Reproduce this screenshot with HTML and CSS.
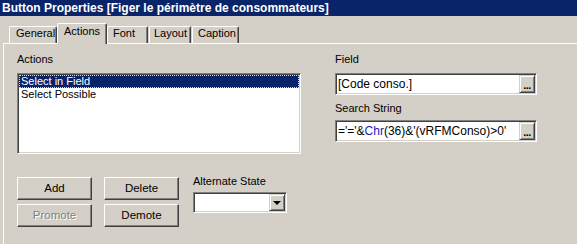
FILE: index.html
```html
<!DOCTYPE html>
<html>
<head>
<meta charset="utf-8">
<link rel="stylesheet" href="styles.css">
</head>
<body>
<div class="titlebar">Button Properties [Figer le périmètre de consommateurs]</div>
<div class="tabs">
  <div class="tab t-general">General</div>
  <div class="tab active t-actions">Actions</div>
  <div class="tab t-font">Font</div>
  <div class="tab t-layout">Layout</div>
  <div class="tab t-caption">Caption</div>
</div>
<div class="panel">
  <div class="top">
    <div class="col-left">
      <div class="label">Actions</div>
      <div class="listbox">
        <div class="item selected"><span class="focus">Select in Field</span></div>
        <div class="item">Select Possible</div>
      </div>
    </div>
    <div class="col-right">
      <div class="label">Field</div>
      <div class="field">
        <span class="value">[Code conso.]</span>
        <span class="dots">...</span>
      </div>
      <div class="label label-search">Search String</div>
      <div class="field">
        <span class="value">='='&amp;<span class="fn">Chr</span>(36)&amp;'(vRFMConso)&gt;0'</span>
        <span class="dots">...</span>
      </div>
    </div>
  </div>
  <div class="bottom">
    <div class="buttons">
      <div class="btn">Add</div>
      <div class="btn">Delete</div>
      <div class="btn disabled">Promote</div>
      <div class="btn">Demote</div>
    </div>
    <div class="alt">
      <div class="label">Alternate State</div>
      <div class="combo">
        <span class="combo-value"></span>
        <span class="combo-btn"><span class="arrow"></span></span>
      </div>
    </div>
  </div>
</div>
</body>
</html>
```

FILE: styles.css
```css
* { box-sizing: border-box; }
html, body {
  margin: 0;
  padding: 0;
  width: 577px;
  height: 244px;
  overflow: hidden;
  background: #d4d0c8;
  font-family: "Liberation Sans", Arial, sans-serif;
  font-size: 11px;
  color: #000;
}
.titlebar {
  height: 16px;
  background: #0a246a;
  color: #fff;
  font-weight: bold;
  font-size: 12px;
  line-height: 16px;
  padding-left: 2px;
  white-space: nowrap;
}
.tabs {
  height: 27px;
  display: flex;
  align-items: flex-end;
  padding-left: 9px;
}
.tab {
  height: 17px;
  border-top: 1px solid #fff;
  border-left: 1px solid #fff;
  border-right: 1px solid #404040;
  border-radius: 2px 2px 0 0;
  box-shadow: inset -1px 0 #808080;
  padding-left: 5px;
  line-height: 13px;
  white-space: nowrap;
}
.t-general { width: 48px; padding-left: 6px; }
.t-actions { width: 50px; }
.t-font { width: 41px; }
.t-layout { width: 42px; margin-left: 1px; padding-left: 4px; }
.t-caption { width: 47px; margin-left: 1px; }
.tab.active {
  height: 21px;
  margin-bottom: -1px;
  padding-top: 1px;
  padding-left: 6px;
  background: #d4d0c8;
  position: relative;
  z-index: 1;
}
.panel {
  margin-left: 3px;
  height: 201px;
  border-top: 1px solid #fff;
  border-left: 1px solid #fff;
  padding: 9px 0 0 13px;
}
.label {
  height: 13px;
  line-height: 13px;
  margin-bottom: 7px;
  white-space: nowrap;
}
.top {
  display: flex;
}
.col-left {
  width: 284px;
}
.listbox {
  height: 81px;
  background: #fff;
  border: 1px solid;
  border-color: #808080 #fff #fff #808080;
  box-shadow: inset 1px 1px #404040, inset -1px -1px #d4d0c8;
  padding: 1px 1px 0 1px;
}
.item {
  height: 13px;
  line-height: 13px;
  padding-left: 2px;
  white-space: nowrap;
}
.item.selected {
  background: #0a246a;
  color: #fff;
  outline: 1px dotted #e8e0a0;
  outline-offset: -1px;
}
.col-right {
  margin-left: 34px;
  width: 202px;
}
.field {
  height: 22px;
  display: flex;
  background: #fff;
  border: 1px solid;
  border-color: #808080 #fff #fff #808080;
  box-shadow: inset 1px 1px #404040, inset -1px -1px #d4d0c8;
  padding: 1px;
}
.field .value {
  flex: 1;
  font-size: 12px;
  line-height: 18px;
  padding-left: 1px;
  white-space: nowrap;
  overflow: hidden;
}
.fn { color: #1c1cb4; }
.dots {
  width: 16px;
  height: 18px;
  background: #d4d0c8;
  border: 1px solid;
  border-color: #d4d0c8 #404040 #404040 #d4d0c8;
  box-shadow: inset 1px 1px #fff, inset -1px -1px #808080;
  font-weight: bold;
  font-size: 11px;
  line-height: 9px;
  padding-top: 5px;
  text-align: center;
  letter-spacing: -0.5px;
}
.label-search {
  margin-top: 7px;
  margin-bottom: 5px;
}
.bottom {
  display: flex;
  margin-top: 21px;
}
.buttons {
  display: grid;
  grid-template-columns: 75px 75px;
  grid-auto-rows: 23px;
  column-gap: 12px;
  row-gap: 4px;
  margin-top: 2px;
}
.btn {
  border: 1px solid;
  border-color: #fff #404040 #404040 #fff;
  box-shadow: inset -1px -1px #808080;
  text-align: center;
  font-size: 11.5px;
  line-height: 20px;
}
.btn.disabled {
  color: #808080;
  text-shadow: 1px 1px #fff;
}
.alt {
  margin-left: 14px;
}
.alt .label {
  margin-bottom: 4px;
}
.combo {
  width: 94px;
  height: 21px;
  display: flex;
  background: #fff;
  border: 1px solid;
  border-color: #808080 #fff #fff #808080;
  box-shadow: inset 1px 1px #404040, inset -1px -1px #d4d0c8;
  padding: 1px;
}
.combo-value { flex: 1; }
.combo-btn {
  width: 16px;
  height: 17px;
  background: #d4d0c8;
  border: 1px solid;
  border-color: #d4d0c8 #404040 #404040 #d4d0c8;
  box-shadow: inset 1px 1px #fff, inset -1px -1px #808080;
  display: flex;
  align-items: center;
  justify-content: center;
}
.arrow {
  width: 0;
  height: 0;
  border-left: 4px solid transparent;
  border-right: 4px solid transparent;
  border-top: 4px solid #000;
  margin-top: 1px;
}
```
